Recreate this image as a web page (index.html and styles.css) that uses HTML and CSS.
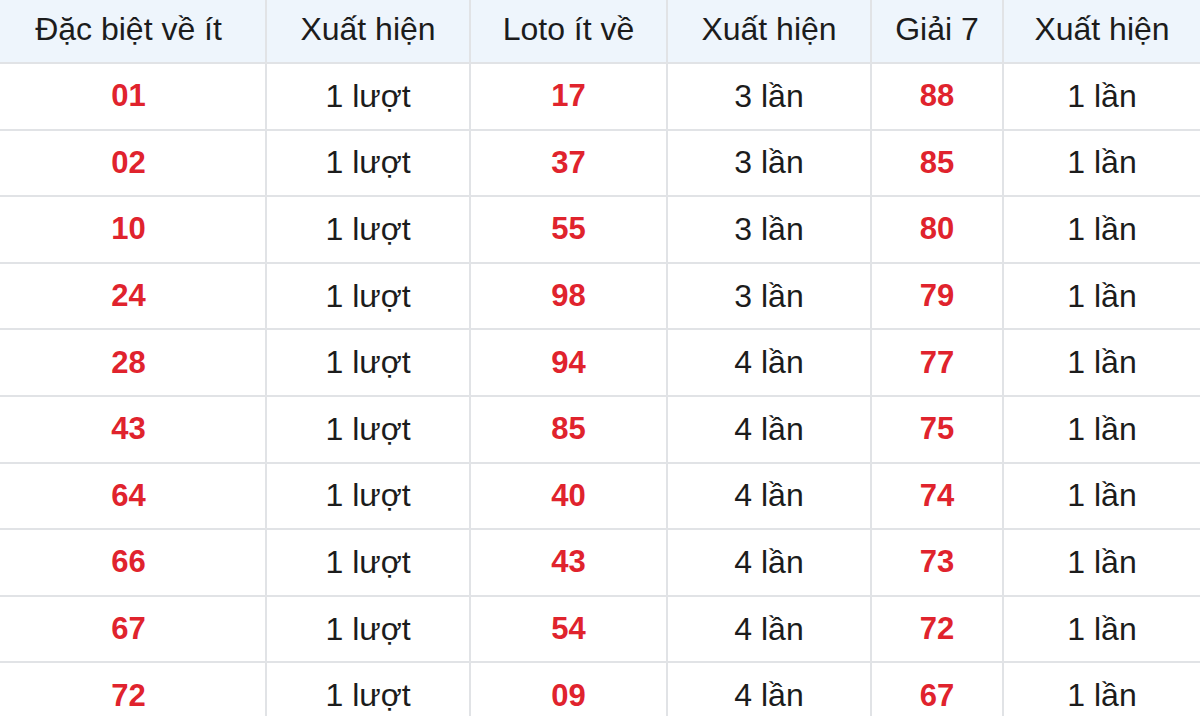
FILE: index.html
```html
<!DOCTYPE html>
<html lang="vi">
<head>
<meta charset="utf-8">
<title>Thống kê</title>
<link rel="stylesheet" href="styles.css">
</head>
<body>
<table class="stats">
  <colgroup>
    <col class="c1"><col class="c2"><col class="c3"><col class="c4"><col class="c5"><col class="c6">
  </colgroup>
  <thead>
    <tr>
      <th>Đặc biệt về ít</th><th>Xuất hiện</th><th>Loto ít về</th><th>Xuất hiện</th><th>Giải 7</th><th>Xuất hiện</th>
    </tr>
  </thead>
  <tbody>
    <tr><td class="num">01</td><td>1 lượt</td><td class="num">17</td><td>3 lần</td><td class="num">88</td><td>1 lần</td></tr>
    <tr><td class="num">02</td><td>1 lượt</td><td class="num">37</td><td>3 lần</td><td class="num">85</td><td>1 lần</td></tr>
    <tr><td class="num">10</td><td>1 lượt</td><td class="num">55</td><td>3 lần</td><td class="num">80</td><td>1 lần</td></tr>
    <tr><td class="num">24</td><td>1 lượt</td><td class="num">98</td><td>3 lần</td><td class="num">79</td><td>1 lần</td></tr>
    <tr><td class="num">28</td><td>1 lượt</td><td class="num">94</td><td>4 lần</td><td class="num">77</td><td>1 lần</td></tr>
    <tr><td class="num">43</td><td>1 lượt</td><td class="num">85</td><td>4 lần</td><td class="num">75</td><td>1 lần</td></tr>
    <tr><td class="num">64</td><td>1 lượt</td><td class="num">40</td><td>4 lần</td><td class="num">74</td><td>1 lần</td></tr>
    <tr><td class="num">66</td><td>1 lượt</td><td class="num">43</td><td>4 lần</td><td class="num">73</td><td>1 lần</td></tr>
    <tr><td class="num">67</td><td>1 lượt</td><td class="num">54</td><td>4 lần</td><td class="num">72</td><td>1 lần</td></tr>
    <tr><td class="num">72</td><td>1 lượt</td><td class="num">09</td><td>4 lần</td><td class="num">67</td><td>1 lần</td></tr>
  </tbody>
</table>
</body>
</html>
```

FILE: styles.css
```css
html, body {
  margin: 0;
  padding: 0;
  background: #ffffff;
  overflow: hidden;
}

.stats {
  width: 1200px;
  border-collapse: collapse;
  table-layout: fixed;
  font-family: "Liberation Sans", Arial, sans-serif;
  color: #1c1c1c;
}

.c1 { width: 266px; }
.c2 { width: 204px; }
.c3 { width: 197px; }
.c4 { width: 204px; }
.c5 { width: 132px; }
.c6 { width: 197px; }

.stats th,
.stats td {
  border: 2px solid #e1e3e6;
  text-align: center;
  vertical-align: middle;
  padding: 0;
}

.stats tr > :first-child {
  border-left: none;
  padding-right: 8px;
}
.stats tr > :last-child { border-right: none; }

.stats thead th {
  height: 59px;
  padding-bottom: 3px;
  background: #eef5fc;
  font-size: 32px;
  font-weight: normal;
  border-top: none;
}

.stats tbody td {
  height: 64.6px;
  font-size: 32px;
}

.stats td.num {
  color: #e0232d;
  font-weight: bold;
  font-size: 31px;
}
```
